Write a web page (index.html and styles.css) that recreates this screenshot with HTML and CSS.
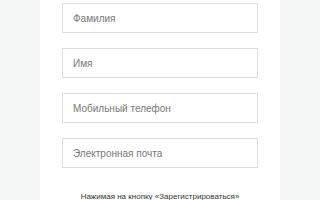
FILE: index.html
```html
<!DOCTYPE html>
<html lang="ru">
<head>
    <meta charset="UTF-8">
    <title>Регистрация</title>
    <link rel="stylesheet" href="styles.css">
</head>
<body>
    <div class="panel">
        <form class="reg-form">
            <input type="text" class="field" placeholder="Фамилия">
            <input type="text" class="field" placeholder="Имя">
            <input type="tel" class="field" placeholder="Мобильный телефон">
            <input type="email" class="field" placeholder="Электронная почта">
        </form>
        <p class="note">Нажимая на кнопку «Зарегистрироваться»</p>
    </div>
</body>
</html>
```

FILE: styles.css
```css
body { margin: 0; background: #f5f6f6; font-family: "Liberation Sans", Arial, sans-serif; }
.panel { width: 196px; margin: 0 auto; padding: 3px 22px 20px; background: #fff; }
.reg-form { display: flex; flex-direction: column; gap: 15px; }
.field { box-sizing: border-box; height: 30px; width: 100%; margin: 0; padding: 0 10px; border: 1px solid #dedede; border-radius: 0; font-family: inherit; font-size: 10px; color: #333; outline: none; }
.field::placeholder { color: #777; }
.note { margin: 24px 0 0; text-align: center; font-size: 8px; color: #333; }
```
